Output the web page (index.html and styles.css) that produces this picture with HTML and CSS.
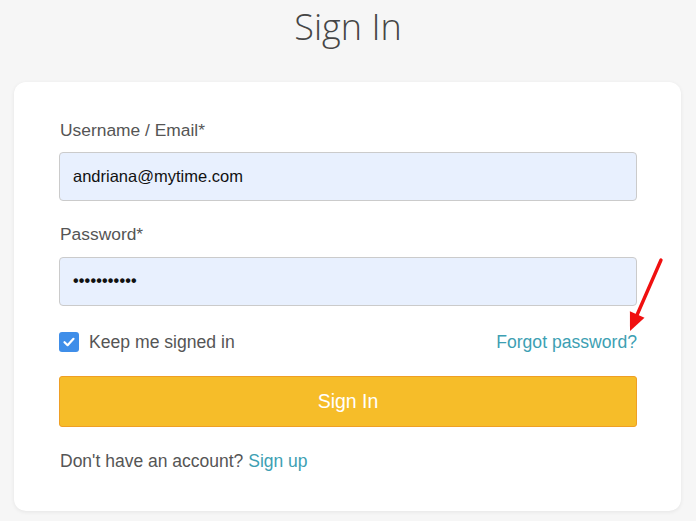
FILE: index.html
```html
<!DOCTYPE html>
<html>
<head>
<meta charset="utf-8">
<link rel="stylesheet" href="styles.css">
</head>
<body>
<h1 class="title">Sign In</h1>
<div class="card">
  <label class="label">Username / Email*</label>
  <div class="input">andriana@mytime.com</div>
  <label class="label label-pw">Password*</label>
  <div class="input input-pw">•••••••••••</div>
  <div class="row">
    <div class="check-wrap">
      <span class="checkbox">
        <svg width="14" height="14" viewBox="0 0 14 14"><path d="M2.5 7.2 L5.6 10.2 L11.5 3.8" fill="none" stroke="#fff" stroke-width="2.2" stroke-linecap="round" stroke-linejoin="round"/></svg>
      </span>
      <span class="check-label">Keep me signed in</span>
    </div>
    <a class="link forgot">Forgot password?</a>
    <svg class="arrow" width="48" height="80" viewBox="0 0 48 80">
      <path d="M43 5 L19 60" stroke="#f01010" stroke-width="3.4" stroke-linecap="round" fill="none"/>
      <path d="M12 76 L11.9 56.3 L26.5 62.7 Z" fill="#f01010"/>
    </svg>
  </div>
  <button class="btn">Sign In</button>
  <p class="footer">Don't have an account? <a class="link">Sign up</a></p>
</div>
</body>
</html>
```

FILE: styles.css
```css
html, body {
  margin: 0;
  padding: 0;
}
body {
  background: #f6f6f6;
  font-family: "Liberation Sans", Arial, sans-serif;
  width: 696px;
  height: 521px;
  overflow: hidden;
}
.title {
  margin: 0;
  padding-top: 5px;
  height: 76px;
  box-sizing: border-box;
  text-align: center;
  font-family: "Open Sans", sans-serif;
  font-weight: 300;
  font-size: 36px;
  line-height: 44px;
  color: #454545;
}
.card {
  margin-left: 14px;
  width: 667px;
  box-sizing: border-box;
  margin-top: 6px;
  background: #fff;
  border-radius: 12px;
  box-shadow: 0 1px 4px rgba(0,0,0,0.07);
  padding: 38px 44px 40px 45px;
  position: relative;
}
.label {
  display: block;
  font-size: 17.4px;
  line-height: 20px;
  color: #555;
  padding-left: 1px;
}
.input {
  margin-top: 12px;
  height: 49px;
  box-sizing: border-box;
  background: #e8f0fe;
  border: 1px solid #cbcbcb;
  border-radius: 4px;
  padding-left: 13px;
  font-size: 16.5px;
  line-height: 47px;
  color: #111;
}
.label-pw {
  margin-top: 23px;
}
.input-pw {
  margin-top: 13px;
  font-size: 16px;
  letter-spacing: 0.2px;
  font-weight: bold;
  line-height: 46px;
}
.row {
  margin-top: 26px;
  height: 20px;
  display: flex;
  align-items: center;
  justify-content: space-between;
  position: relative;
}
.check-wrap {
  display: flex;
  align-items: center;
}
.checkbox {
  width: 20px;
  height: 20px;
  border-radius: 3px;
  background: #3f8ee9;
  display: flex;
  align-items: center;
  justify-content: center;
}
.check-label {
  margin-left: 10px;
  font-size: 17.6px;
  color: #555;
}
.link {
  color: #3d9fb3;
  text-decoration: none;
}
.forgot {
  font-size: 17.6px;
  margin-top: 1px;
}
.arrow {
  position: absolute;
  left: 559px;
  top: -77px;
}
.btn {
  display: block;
  width: 100%;
  margin-top: 24px;
  height: 51px;
  background: #f6bd29;
  border: 1px solid #ef9f24;
  border-radius: 3px;
  color: #fff;
  font-family: "Liberation Sans", Arial, sans-serif;
  font-size: 19.5px;
}
.footer {
  margin: 24px 0 0 0;
  font-size: 17.5px;
  line-height: 20px;
  color: #555;
  padding-left: 1px;
}
```
